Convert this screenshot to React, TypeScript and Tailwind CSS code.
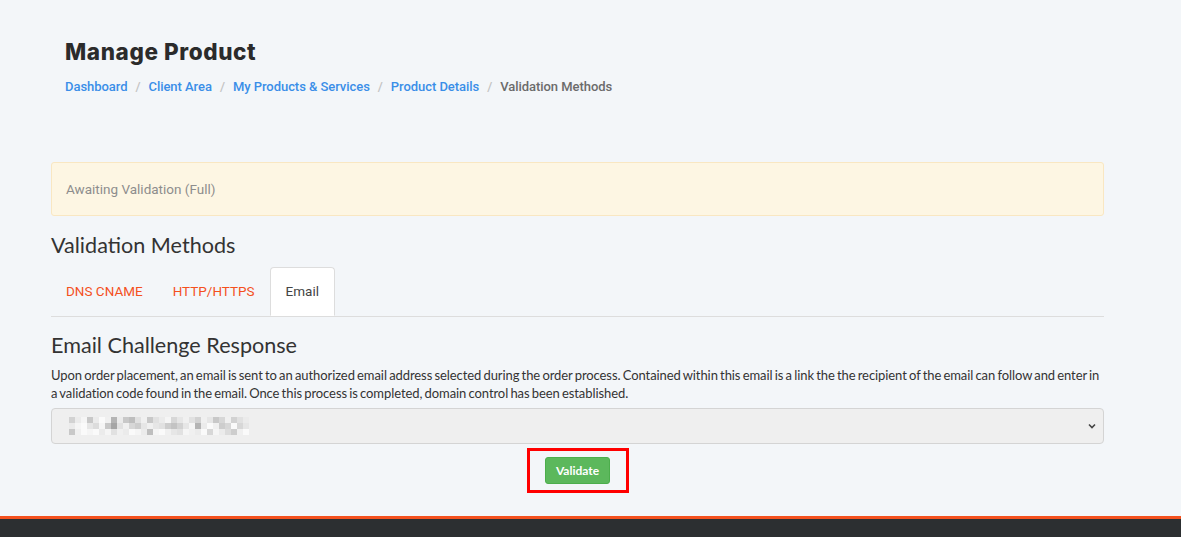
import React from "react";

const pix: number[][] = [
  [210, 235, 245, 200, 235, 250, 240, 180, 235, 200, 190, 225, 240, 200, 225, 235, 245, 215, 230, 240, 225, 210, 240, 230, 200, 215, 240, 210, 225, 235],
  [235, 245, 250, 230, 220, 245, 200, 165, 225, 240, 215, 205, 230, 240, 230, 225, 205, 195, 210, 230, 245, 180, 235, 250, 240, 205, 215, 250, 215, 230],
  [200, 240, 250, 245, 250, 235, 245, 225, 240, 235, 250, 245, 235, 190, 245, 250, 240, 230, 225, 245, 240, 235, 250, 215, 245, 235, 220, 205, 240, 250],
];

function Blur() {
  return (
    <svg width="180" height="18" viewBox="0 0 180 18" className="block">
      {pix.map((row, r) =>
        row.map((v, c) => (
          <rect key={`${r}-${c}`} x={c * 6} y={r * 6} width="6" height="6" fill={`rgb(${v},${v},${v})`} />
        ))
      )}
    </svg>
  );
}

export default function App() {
  const crumbs = ["Dashboard", "Client Area", "My Products & Services", "Product Details"];
  return (
    <div className="min-h-[537px] flex flex-col bg-[#f3f6f9]">
      <div className="pl-[65px] pt-[38px]">
        <h1 className="text-[22.5px] leading-[28px] font-extrabold text-[#2b2b2b] tracking-[0.6px]" style={{ fontFamily: "Inter, 'Open Sans', sans-serif" }}>
          Manage Product
        </h1>
        <div className="mt-[12px] flex items-center text-[13px] leading-[18px] font-medium tracking-[-0.05px]" style={{ fontFamily: "Roboto, 'Liberation Sans', sans-serif" }}>
          {crumbs.map((c) => (
            <React.Fragment key={c}>
              <span className="text-[#3a8ee8]">{c}</span>
              <span className="text-[#c4c4c4] px-[8px]">/</span>
            </React.Fragment>
          ))}
          <span className="text-[#6b6b6b]">Validation Methods</span>
        </div>
      </div>

      <div className="ml-[51px] w-[1053px] mt-[66px]" style={{ fontFamily: "Lato, 'Open Sans', sans-serif" }}>
        <div className="h-[54px] flex items-center pl-[14px] bg-[#fdf6e3] border border-[#f9e7c2] rounded-[3px] text-[13.5px] text-[#8d8d8d]" style={{ fontFamily: "Roboto, 'Liberation Sans', sans-serif" }}>
          Awaiting Validation (Full)
        </div>

        <h2 className="mt-[15px] text-[21.6px] leading-[28px] text-[#333]">Validation Methods</h2>

        <div className="mt-[8px] flex border-b border-[#dddddd] text-[13.5px]" style={{ fontFamily: "Roboto, 'Liberation Sans', sans-serif" }}>
          <div className="px-[15px] h-[49px] flex items-center text-[#f4511e]">DNS CNAME</div>
          <div className="px-[15px] h-[49px] flex items-center text-[#f4511e]">HTTP/HTTPS</div>
          <div className="px-[15px] h-[49px] flex items-center text-[#444] bg-white border border-[#dddddd] border-b-white rounded-t-[4px] -mb-px">Email</div>
        </div>

        <h2 className="mt-[14px] text-[21.6px] leading-[28px] text-[#333]">Email Challenge Response</h2>
        <p className="mt-[7px] text-[13px] leading-[18px] text-[#333] tracking-[-0.08px] [word-spacing:-1px]">
          Upon order placement, an email is sent to an authorized email address selected during the order process. Contained within this email is a link the the recipient of the email can follow and enter in a validation code found in the email. Once this process is completed, domain control has been established.
        </p>

        <div className="mt-[6px] h-[36px] flex items-center justify-between bg-[#efefef] border border-[#d4d4d4] rounded-[4px] pl-[17px] pr-[6px]">
          <Blur />
          <svg width="10" height="10" viewBox="0 0 10 10" className="block">
            <path d="M2 3.5 L5 6.5 L8 3.5" fill="none" stroke="#444" strokeWidth="1.6" />
          </svg>
        </div>

        <div className="flex justify-center mt-[4px]">
          <div className="border-[3px] border-[#f00] w-[102px] h-[45px] flex items-center justify-center">
            <button className="w-[65px] h-[27px] bg-[#5cb85c] border border-[#4cae4c] rounded-[3px] text-white text-[12px] font-bold" style={{ fontFamily: "Lato, sans-serif" }}>
              Validate
            </button>
          </div>
        </div>
      </div>

      <div className="mt-auto h-[21px] border-t-[3px] border-[#f4511e] bg-[#2c2f31]" />
    </div>
  );
}
